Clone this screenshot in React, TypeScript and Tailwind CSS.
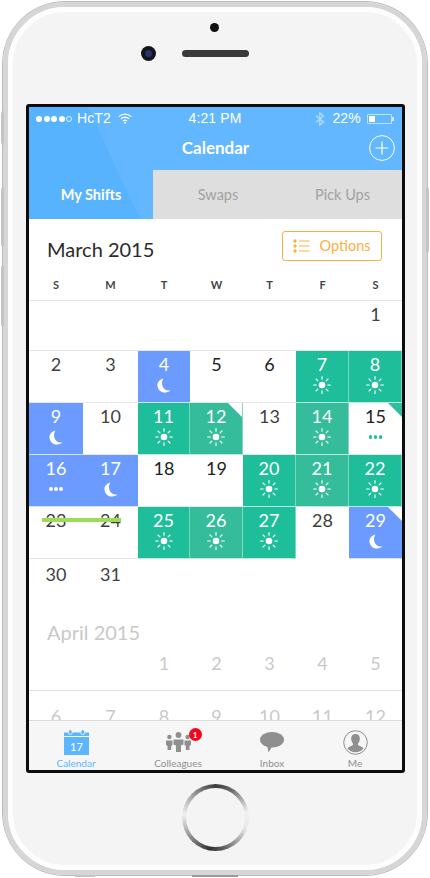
import React from "react";

const Sun = () => (
  <svg width="18" height="18" viewBox="0 0 18 18" className="block" fill="none" stroke="#fff" strokeWidth="1.1" strokeLinecap="round">
    <circle cx="9" cy="9" r="3.3" fill="#fff" stroke="none" />
    <path d="M9 .6V3.2M9 14.8v2.6M.6 9h2.6M14.8 9h2.6M3 3l1.9 1.9M13.1 13.1 15 15M3 15l1.9-1.9M13.1 4.900 15 3" />
  </svg>
);
const Moon = () => (
  <svg width="14" height="15" viewBox="0 0 14 15" className="block">
    <path fill="#fff" d="M6.500.5C2.500 1.500 0 4.500.5 8c.5 4 4 7 8 6.500 2-.2 4-1 5-2-4.500.5-7.500-2-8.300-5.500C4.700 4.500 5.200 2.200 6.500.5Z" />
  </svg>
);
const Dots = ({ cls }: { cls: string }) => (
  <div className="flex h-[15px] items-center gap-[1.500px]">
    <span className={`h-[3.500px] w-[3.500px] rounded-full ${cls}`} />
    <span className={`h-[3.500px] w-[3.500px] rounded-full ${cls}`} />
    <span className={`h-[3.500px] w-[3.500px] rounded-full ${cls}`} />
  </div>
);

type Kind = "b" | "g" | "l" | "w";
type C = { n?: number; k?: Kind; i?: "sun" | "moon" | "dots"; fold?: boolean; dark?: boolean; noline?: boolean };

const bgOf: Record<Kind, string> = {
  b: "bg-[#6b9bff] border-b-[#d5e1fb]",
  g: "bg-[#1fbe9b] border-b-[#bfe8de] border-r border-r-white/40",
  l: "bg-[#35bc9b] border-b-[#bfe8de] border-r border-r-white/40",
  w: "bg-white border-b-[#e6e6e6]",
};

const Cell = ({ n, k = "w", i, fold, dark, noline }: C) => {
  const white = k !== "w";
  return (
    <div className={`relative flex flex-col items-center border-b pt-[3px] ${bgOf[k]} ${noline ? "border-b-transparent" : ""}`}>
      <span className={`h-[21px] text-[18px] leading-[21px] ${white ? "text-white" : dark ? "text-[#222222]" : "text-[#3f3f3f]"}`}>{n}</span>
      <div className="mt-[1px] flex h-[18px] items-center justify-center">
        {i === "sun" && <Sun />}
        {i === "moon" && <Moon />}
        {i === "dots" && <Dots cls={white ? "bg-white" : "bg-[#1fbe9b]"} />}
      </div>
      {fold && (
        <svg width="14" height="14" viewBox="0 0 14 14" className="absolute right-0 top-0 block">
          <path d="M0 0H14V14Z" fill={k === "w" ? "#2fbf9d" : "#fff"} />
        </svg>
      )}
    </div>
  );
};

const cols = "grid grid-cols-[54px_55px_52px_53px_53px_53px_53px]";

const rows: C[][] = [
  [{ n: 2 }, { n: 3 }, { n: 4, k: "b", i: "moon" }, { n: 5, dark: true }, { n: 6, dark: true }, { n: 7, k: "g", i: "sun" }, { n: 8, k: "g", i: "sun" }],
  [{ n: 9, k: "b", i: "moon" }, { n: 10 }, { n: 11, k: "g", i: "sun" }, { n: 12, k: "l", i: "sun", fold: true }, { n: 13 }, { n: 14, k: "l", i: "sun" }, { n: 15, i: "dots", fold: true, dark: true }],
  [{ n: 16, k: "b", i: "dots" }, { n: 17, k: "b", i: "moon" }, { n: 18, dark: true }, { n: 19, dark: true }, { n: 20, k: "g", i: "sun" }, { n: 21, k: "l", i: "sun" }, { n: 22, k: "g", i: "sun" }],
  [{ n: 23 }, { n: 24 }, { n: 25, k: "g", i: "sun" }, { n: 26, k: "l", i: "sun" }, { n: 27, k: "g", i: "sun" }, { n: 28, noline: true }, { n: 29, k: "b", i: "moon", fold: true }],
];

const Wifi = () => (
  <svg width="14" height="11" viewBox="0 0 14 11" fill="none" stroke="#fff" strokeWidth="1.300" className="block">
    <path d="M.8 3.600C4.300.3 9.700.3 13.200 3.600M2.900 5.800c2.300-2.100 5.900-2.100 8.200 0M5 8c1.200-1 2.800-1 4 0" />
    <circle cx="7" cy="9.800" r="1" fill="#fff" stroke="none" />
  </svg>
);

const Signal = () => (
  <div className="flex items-center gap-[1.500px]">
    {[0, 1, 2, 3].map((d) => (
      <span key={d} className="h-[6px] w-[6px] rounded-full bg-white" />
    ))}
    <span className="h-[6px] w-[6px] rounded-full border border-white/80" />
  </div>
);

const Battery = () => (
  <div className="flex items-center">
    <div className="flex h-[10px] w-[25px] items-center rounded-[1px] border border-white/60 p-px">
      <span className="h-full w-[6px] bg-white" />
    </div>
    <span className="h-[4px] w-[2px] bg-white/70" />
  </div>
);

const Bluetooth = () => (
  <svg width="10" height="14" viewBox="0 0 10 14" fill="none" stroke="#fff" strokeOpacity=".5" strokeWidth="1.300" className="block">
    <path d="M1 3.800 8.500 10 4.800 13V1L8.500 4 1 10.200" />
  </svg>
);

const Plus = () => (
  <svg width="26" height="26" viewBox="0 0 26 26" fill="none" stroke="#fff" strokeWidth="1" className="block">
    <circle cx="13" cy="13" r="12.400" />
    <path strokeWidth="1.200" d="M13 6.500v13M6.500 13h13" />
  </svg>
);

const ListIcon = () => (
  <svg width="17" height="14" viewBox="0 0 17 14" className="block">
    <circle cx="2" cy="2" r="1.700" fill="#fbb040" />
    <circle cx="2" cy="7" r="1.700" fill="#fbb040" />
    <circle cx="2" cy="12" r="1.700" fill="#fbb040" />
    <path d="M6 2h10.500M6 7h10.500M6 12h10.500" stroke="#fbb040" strokeWidth="1" fill="none" />
  </svg>
);

const CalendarIcon = () => (
  <svg width="25" height="26" viewBox="0 0 25 26" className="block">
    <path d="M0 3.500h25V26H0Z" fill="#5cb5ff" />
    <path d="M0 7.500h25" stroke="#f6f6f6" strokeWidth="1" />
    <rect x="4.500" y=".8" width="3.600" height="4.800" rx="1.600" fill="#5cb5ff" stroke="#f6f6f6" strokeWidth=".8" />
    <rect x="16.900" y=".8" width="3.600" height="4.800" rx="1.600" fill="#5cb5ff" stroke="#f6f6f6" strokeWidth=".8" />
    <text x="12.500" y="21.500" textAnchor="middle" fontSize="11" fontFamily="Lato, sans-serif" fill="#fff">17</text>
  </svg>
);

const ColleaguesIcon = () => (
  <svg width="25" height="20" viewBox="0 0 25 20" fill="#8f8f8f" className="block">
    <circle cx="12.500" cy="3" r="2.900" />
    <path d="M7.500 7.500h10v5l-2.500 1v6.500h-5v-6.500l-2.500-1Z" />
    <circle cx="3.400" cy="5" r="2.200" />
    <path d="M0 8.500h6.500v4.500l-1.300 1v4H1.500v-4L0 13Z" />
    <circle cx="21.600" cy="5" r="2.200" />
    <path d="M18.500 8.500H25v4.500l-1.500 1v4h-3.700v-4l-1.300-1Z" />
  </svg>
);

const InboxIcon = () => (
  <svg width="24" height="21" viewBox="0 0 24 21" fill="#8f8f8f" className="block">
    <ellipse cx="12" cy="7.800" rx="12" ry="7.800" />
    <path d="M7 13h6l-4.500 7.500Z" />
  </svg>
);

const MeIcon = () => (
  <svg width="25" height="25" viewBox="0 0 25 25" className="block">
    <circle cx="12.500" cy="12.500" r="11.800" fill="none" stroke="#8f8f8f" strokeWidth="1" />
    <path fill="#8f8f8f" d="M12.500 4c-3 0-4.600 2.300-4.300 5.200.2 1.800.9 3.300 1.800 4.300v1.600c-1.800 1-4.200 1.600-5.600 3.200a10.200 10.200 0 0 0 16.200 0c-1.400-1.600-3.800-2.200-5.600-3.200v-1.600c.9-1 1.600-2.500 1.800-4.300C17.100 6.300 15.500 4 12.500 4Z" />
  </svg>
);

const Tab = ({ label, active, children }: { label: string; active?: boolean; children: React.ReactNode }) => (
  <div className="flex flex-col items-center">
    <div className="flex h-[36px] items-center pt-[6px]">{children}</div>
    <span className={`text-[10px] leading-[13px] ${active ? "text-[#5cb5ff]" : "text-[#8f8f8f]"}`}>{label}</span>
  </div>
);

export default function App() {
  return (
    <div className="relative h-[878px] w-[430px] overflow-hidden bg-white [font-family:Lato,sans-serif]">
      {/* side buttons */}
      <span className="absolute left-px top-[111px] h-[34px] w-[3px] rounded-l-sm bg-[#c4c4c4]" />
      <span className="absolute left-px top-[187px] h-[60px] w-[3px] rounded-l-sm bg-[#c4c4c4]" />
      <span className="absolute left-px top-[265px] h-[62px] w-[3px] rounded-l-sm bg-[#c4c4c4]" />
      <span className="absolute right-px top-[187px] h-[66px] w-[3px] rounded-r-sm bg-[#c4c4c4]" />
      <span className="absolute bottom-px left-[75px] h-[2px] w-[20px] bg-[#c4c4c4]" />
      <span className="absolute bottom-px left-[192px] h-[2px] w-[46px] bg-[#9a9a9a]" />

      <div className="ml-[3px] mt-[2px] h-[873px] w-[424px] rounded-[62px] border-[5px] border-[#d6d6d6] shadow-[0_0_0_1px_#bdbdbd]">
        <div className="flex h-full flex-col rounded-[57px] border-[5px] border-[#fdfdfd] bg-[#f4f4f4]">
          {/* top bezel */}
          <div className="flex h-[92px] flex-col">
            <span className="ml-[197px] mt-[11px] h-[9px] w-[9px] rounded-full bg-[#111111]" />
            <div className="ml-[128px] mt-[14px] flex items-center gap-[26px]">
              <span className="flex h-[15px] w-[15px] items-center justify-center rounded-full bg-[#15151c]">
                <span className="h-[7px] w-[7px] rounded-full bg-[#24356e]" />
              </span>
              <span className="h-[7px] w-[67px] rounded-full bg-[#3a3a3a]" />
            </div>
          </div>

          {/* screen */}
          <div className="ml-[13px] flex h-[669px] w-[379px] flex-col overflow-hidden rounded-[3px] border-[3px] border-[#0c0c0c] bg-white">
            <div className="relative bg-[#63b7ff] text-white">
              <div className="absolute inset-0 bg-[#58b3fe] [clip-path:polygon(0_0,59px_0,111px_112px,0_112px)]" />
              <div className="relative flex h-[23px] items-center justify-between pl-[7px] pr-[8px] text-[14px] [font-family:'Liberation_Sans',sans-serif]">
                <div className="flex w-[120px] items-center">
                  <Signal />
                  <span className="ml-[5px] tracking-[.1px]">HcT2</span>
                  <span className="ml-[7px]"><Wifi /></span>
                </div>
                <span className="tracking-[.1px]">4:21 PM</span>
                <div className="flex w-[120px] items-center justify-end">
                  <Bluetooth />
                  <span className="ml-[7px] mr-[6px] tracking-[.2px]">22%</span>
                  <Battery />
                </div>
              </div>
              <div className="relative flex h-[40px] items-center justify-center pb-[4px]">
                <span className="text-[17px] font-bold">Calendar</span>
                <span className="absolute right-[7px] top-[5px]"><Plus /></span>
              </div>
              <div className="relative grid h-[49px] grid-cols-[124px_130px_119px] items-center text-center text-[14.500px]">
                <span className="font-bold">My Shifts</span>
                <span className="flex h-full items-center justify-center bg-[#dedede] text-[#a2a2a2]">Swaps</span>
                <span className="flex h-full items-center justify-center bg-[#dedede] text-[#a2a2a2]">Pick Ups</span>
              </div>
            </div>

            {/* scroll area */}
            <div className="min-h-0 flex-1 overflow-hidden">
              <div className="flex h-[42px] items-end justify-between pl-[18px] pr-[20px]">
                <span className="text-[20px] leading-[24px] text-[#2b2b2b]">March 2015</span>
                <div className="flex h-[30px] w-[100px] items-center justify-center gap-[9px] rounded-[3px] border border-[#fbb040] text-[14.500px] text-[#fbb040]">
                  <ListIcon />
                  <span>Options</span>
                </div>
              </div>
              <div className={`${cols} h-[40px] items-center border-b border-[#e6e6e6] pt-[9px] text-center text-[11px] font-bold text-[#444444]`}>
                {["S", "M", "T", "W", "T", "F", "S"].map((d, idx) => (
                  <span key={idx}>{d}</span>
                ))}
              </div>
              <div className={`${cols} h-[50px]`}>
                {[0, 1, 2, 3, 4, 5].map((x) => (
                  <div key={x} className="border-b border-[#e6e6e6]" />
                ))}
                <Cell n={1} />
              </div>
              <div className="relative">
                {rows.map((r, ri) => (
                  <div key={ri} className={`${cols} h-[52px]`}>
                    {r.map((c, ci) => (
                      <Cell key={ci} {...c} />
                    ))}
                  </div>
                ))}
                <span className="absolute left-[13px] top-[167px] h-[4px] w-[79px] bg-[#9cdc55]" />
              </div>
              <div className={`${cols} h-[50px]`}>
                <div className="pt-[5px] text-center text-[18px] leading-[21px] text-[#3f3f3f]">30</div>
                <div className="pt-[5px] text-center text-[18px] leading-[21px] text-[#3f3f3f]">31</div>
              </div>
              <div className="flex h-[40px] items-center pl-[18px] pt-[6px] text-[20px] text-[#c9c9c9]">April 2015</div>
              <div className={`${cols} h-[42px] border-b border-[#e0e0e0] pt-[4px] text-center text-[18px] leading-[21px] text-[#c9c9c9]`}>
                <span />
                <span />
                {[1, 2, 3, 4, 5].map((n) => (
                  <span key={n}>{n}</span>
                ))}
              </div>
              <div className={`${cols} pt-[15px] text-center text-[18px] leading-[21px] text-[#c9c9c9]`}>
                {[6, 7, 8, 9, 10, 11, 12].map((n) => (
                  <span key={n}>{n}</span>
                ))}
              </div>
            </div>

            {/* tab bar */}
            <div className="grid h-[50px] grid-cols-[94px_110px_78px_88px] border-t border-[#dcdcdc] bg-[#f6f6f6]">
              <Tab label="Calendar" active><CalendarIcon /></Tab>
              <Tab label="Colleagues">
                <span className="relative block">
                  <ColleaguesIcon />
                  <span className="absolute -right-[11px] -top-[4px] flex h-[13px] w-[13px] items-center justify-center rounded-full bg-[#f0061e] text-[8px] font-bold leading-none text-white">1</span>
                </span>
              </Tab>
              <Tab label="Inbox"><InboxIcon /></Tab>
              <Tab label="Me"><MeIcon /></Tab>
            </div>
          </div>

          {/* home button */}
          <div className="flex flex-1 justify-center pt-[11px]">
            <div className="flex h-[67px] w-[67px] items-center justify-center rounded-full bg-[conic-gradient(#3a3a3a_0deg,#6a6a6a_30deg,#f0f0f0_80deg,#e8e8e8_110deg,#555555_170deg,#333333_190deg,#8a8a8a_230deg,#f0f0f0_275deg,#aaaaaa_310deg,#3a3a3a_360deg)]">
              <span className="h-[59px] w-[59px] rounded-full bg-[#f4f4f4]" />
            </div>
          </div>
        </div>
      </div>
    </div>
  );
}
